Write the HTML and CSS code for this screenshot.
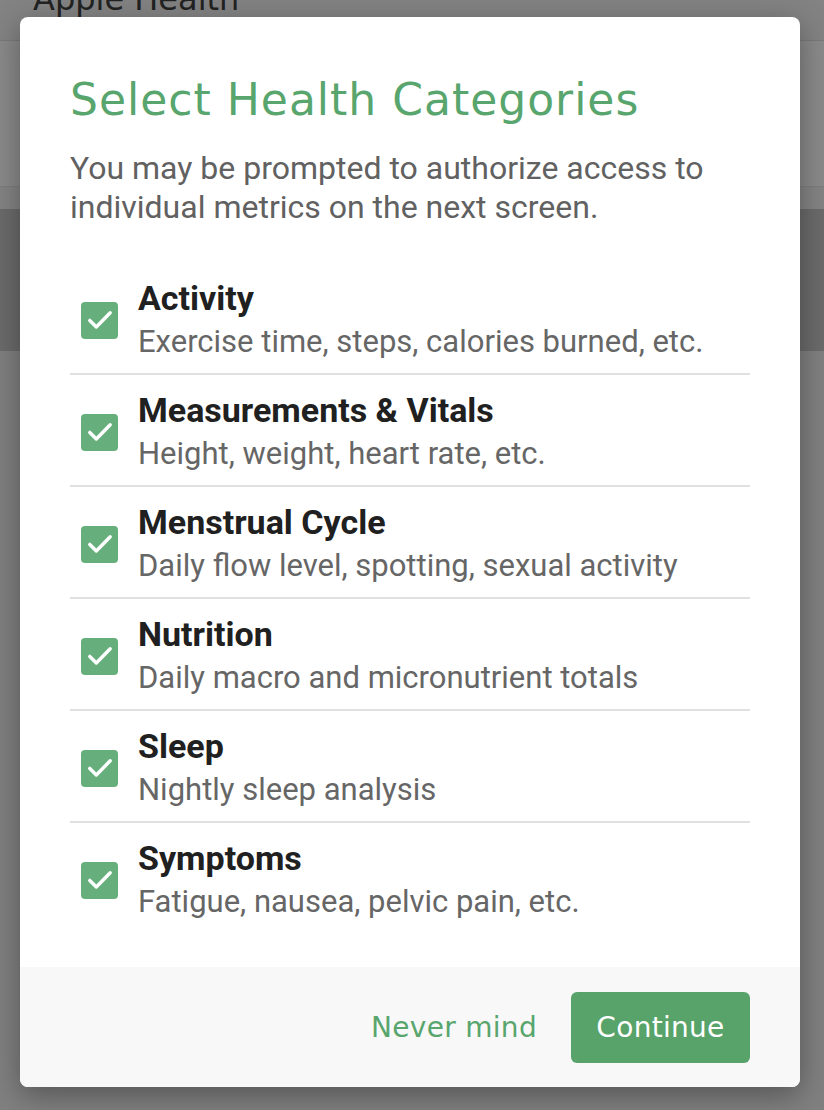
FILE: index.html
```html
<!DOCTYPE html>
<html lang="en">
<head>
  <meta charset="UTF-8" />
  <meta name="viewport" content="width=device-width, initial-scale=1.0"/>
  <title>Apple Health</title>
  <link rel="stylesheet" href="styles.css">
</head>
<body>
  <!-- Page behind the dialog, dimmed -->
  <div class="backdrop">
    <header class="app-header">
      <h1>Apple Health</h1>
    </header>
    <div class="app-band"></div>
    <div class="app-strip"></div>
    <div class="app-dark"></div>
  </div>

  <div class="modal">
    <div class="modal-body">
      <h2 class="modal-title">Select Health Categories</h2>
      <p class="modal-intro">You may be prompted to authorize access to individual metrics on the next screen.</p>

      <ul class="category-list">
        <li class="category">
          <span class="check"><svg viewBox="0 0 24 24"><path d="M4.8 12.3l4.6 4.6 9.8-10"/></svg></span>
          <div class="category-text">
            <div class="category-name">Activity</div>
            <div class="category-desc">Exercise time, steps, calories burned, etc.</div>
          </div>
        </li>
        <li class="category">
          <span class="check"><svg viewBox="0 0 24 24"><path d="M4.8 12.3l4.6 4.6 9.8-10"/></svg></span>
          <div class="category-text">
            <div class="category-name">Measurements &amp; Vitals</div>
            <div class="category-desc">Height, weight, heart rate, etc.</div>
          </div>
        </li>
        <li class="category">
          <span class="check"><svg viewBox="0 0 24 24"><path d="M4.8 12.3l4.6 4.6 9.8-10"/></svg></span>
          <div class="category-text">
            <div class="category-name">Menstrual Cycle</div>
            <div class="category-desc">Daily flow level, spotting, sexual activity</div>
          </div>
        </li>
        <li class="category">
          <span class="check"><svg viewBox="0 0 24 24"><path d="M4.8 12.3l4.6 4.6 9.8-10"/></svg></span>
          <div class="category-text">
            <div class="category-name">Nutrition</div>
            <div class="category-desc">Daily macro and micronutrient totals</div>
          </div>
        </li>
        <li class="category">
          <span class="check"><svg viewBox="0 0 24 24"><path d="M4.8 12.3l4.6 4.6 9.8-10"/></svg></span>
          <div class="category-text">
            <div class="category-name">Sleep</div>
            <div class="category-desc">Nightly sleep analysis</div>
          </div>
        </li>
        <li class="category">
          <span class="check"><svg viewBox="0 0 24 24"><path d="M4.8 12.3l4.6 4.6 9.8-10"/></svg></span>
          <div class="category-text">
            <div class="category-name">Symptoms</div>
            <div class="category-desc">Fatigue, nausea, pelvic pain, etc.</div>
          </div>
        </li>
      </ul>
    </div>

    <footer class="modal-footer">
      <button class="btn-text">Never mind</button>
      <button class="btn-primary">Continue</button>
    </footer>
  </div>
</body>
</html>
```

FILE: styles.css
```css
/* General Reset */
* {
  margin: 0;
  padding: 0;
  box-sizing: border-box;
}

body {
  font-family: Roboto, 'Liberation Sans', sans-serif;
  background: #808080;
  width: 824px;
  height: 1110px;
  overflow: hidden;
  position: relative;
}

/* Dimmed app behind */
.backdrop {
  position: absolute;
  inset: 0;
}

.app-header {
  height: 41px;
  background: #838383;
  border-bottom: 1px solid #7a7a7a;
  overflow: hidden;
}

.app-header h1 {
  font-family: 'DejaVu Sans', sans-serif;
  font-weight: 400;
  font-size: 32px;
  color: #222;
  padding-left: 33px;
  line-height: 1;
  margin-top: -17px;
}

.app-band {
  height: 146px;
  background: #8a8a8a;
  border-bottom: 1px solid #7e7e7e;
}

.app-strip {
  height: 22px;
  background: #848484;
}

.app-dark {
  height: 142px;
  background: #6b6b6b;
}

/* Dialog */
.modal {
  position: absolute;
  left: 20px;
  top: 17px;
  width: 780px;
  height: 1070px;
  background: #fff;
  border-radius: 8px;
  overflow: hidden;
  box-shadow: 0 8px 30px rgba(0,0,0,0.35);
  display: flex;
  flex-direction: column;
}

.modal-body {
  flex: 1;
  padding: 56px 50px 0;
}

.modal-title {
  font-family: 'DejaVu Sans', sans-serif;
  font-weight: 400;
  font-size: 44px;
  letter-spacing: 1px;
  line-height: 54px;
  color: #58a56d;
}

.modal-intro {
  margin-top: 22px;
  font-size: 32px;
  line-height: 39px;
  color: #616161;
  max-width: 650px;
}

.category-list {
  list-style: none;
  margin-top: 36px;
}

.category {
  display: flex;
  align-items: center;
  gap: 20px;
  padding: 13px 0 9px;
  border-bottom: 2px solid #e0e0e0;
}

.category:last-child {
  border-bottom: none;
}

.check {
  flex: none;
  width: 37px;
  height: 37px;
  margin-left: 11px;
  border-radius: 4px;
  background: #66af7d;
  display: flex;
  align-items: center;
  justify-content: center;
}

.check svg {
  width: 34px;
  height: 34px;
  fill: none;
  stroke: #fff;
  stroke-width: 2.4;
  stroke-linecap: round;
  stroke-linejoin: round;
}

.category-name {
  font-size: 34px;
  font-weight: 700;
  line-height: 44px;
  color: #202020;
}

.category-desc {
  font-size: 31px;
  line-height: 44px;
  color: #666;
}

/* Footer */
.modal-footer {
  height: 120px;
  background: #f8f8f8;
  display: flex;
  justify-content: flex-end;
  align-items: center;
  gap: 34px;
  padding: 0 50px;
}

.btn-text,
.btn-primary {
  font-family: 'DejaVu Sans', sans-serif;
  font-size: 28px;
  letter-spacing: 0.3px;
  font-weight: 400;
  border: none;
  cursor: pointer;
}

.btn-text {
  background: none;
  color: #58a56d;
}

.btn-primary {
  background: #57a36a;
  color: #fff;
  width: 179px;
  height: 71px;
  border-radius: 6px;
}
```
